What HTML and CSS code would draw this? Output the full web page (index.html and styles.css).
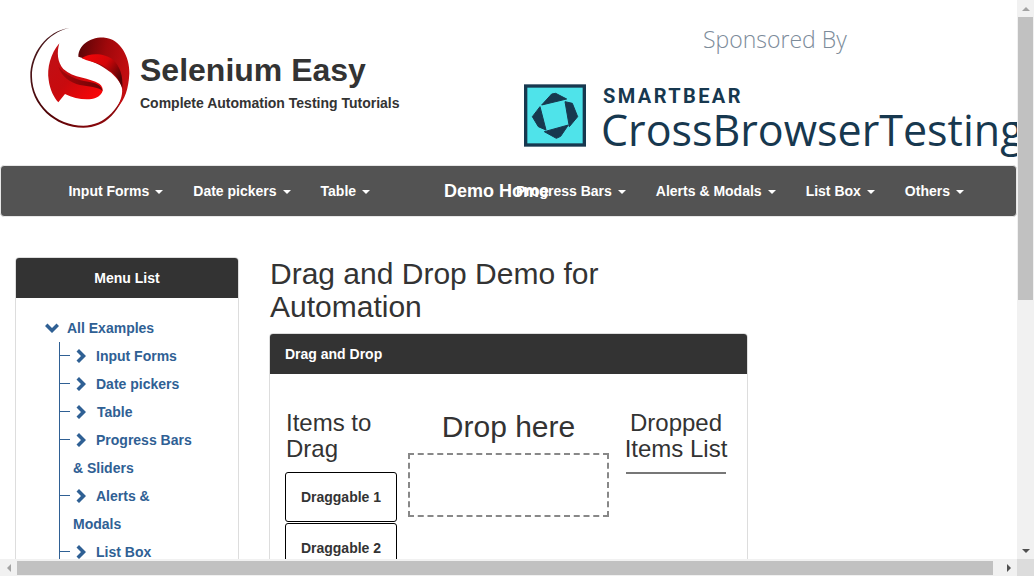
FILE: index.html
```html
<!DOCTYPE HTML>
<html>
<head>
<meta charset="utf-8">
<title>Selenium Easy - Drag and Drop Demo</title>
<link rel="stylesheet" href="styles.css">
</head>
<body>
<div class="window">
  <div class="page">
    <header class="top">
      <svg class="logo" viewBox="0 0 315 315" width="105" height="105">
        <defs>
          <linearGradient id="ringGrad" x1="0" y1="0" x2="1" y2="1">
            <stop offset="0" stop-color="#4a2024"/>
            <stop offset="0.5" stop-color="#4d0306"/>
            <stop offset="1" stop-color="#a80a0e"/>
          </linearGradient>
          <linearGradient id="upperGrad" x1="0" y1="0" x2="1" y2="0.3">
            <stop offset="0" stop-color="#560306"/>
            <stop offset="0.55" stop-color="#a0080b"/>
            <stop offset="1" stop-color="#c20d11"/>
          </linearGradient>
          <linearGradient id="foldGrad" x1="0" y1="0" x2="1" y2="0.6">
            <stop offset="0" stop-color="#f50508"/>
            <stop offset="0.55" stop-color="#d40609"/>
            <stop offset="1" stop-color="#560306"/>
          </linearGradient>
          <linearGradient id="lowerGrad" x1="0" y1="0.2" x2="0.8" y2="1">
            <stop offset="0" stop-color="#c01015"/>
            <stop offset="0.5" stop-color="#c80a0e"/>
            <stop offset="1" stop-color="#f80507"/>
          </linearGradient>
          <linearGradient id="stripGrad" x1="0" y1="0" x2="1" y2="0">
            <stop offset="0" stop-color="#a8070a"/>
            <stop offset="1" stop-color="#6a0306"/>
          </linearGradient>
        </defs>
        <path fill="url(#ringGrad)" d="M118 9C50 18 0 85 1 155C2 240 75 308 160 308C225 308 275 265 296 160C275 250 225 302 160 302C80 302 7 238 6 155C5 90 52 22 118 9Z"/>
        <path fill="url(#upperGrad)" d="M145 95C146 60 180 35 225 38C270 42 300 95 298 145C296 190 285 225 262 248C272 225 280 205 275 185C265 155 225 118 145 95Z"/>
        <path fill="url(#foldGrad)" d="M155 100C180 82 225 85 250 105C268 122 280 150 277 190C268 160 245 135 215 120C195 112 170 107 155 100Z"/>
        <path fill="url(#lowerGrad)" d="M88 55C62 85 50 130 56 165C60 195 72 218 85 232L105 207C135 222 175 228 198 218C220 208 225 190 208 176C180 158 130 160 100 132C82 112 80 82 88 55Z"/>
        <path fill="url(#stripGrad)" d="M85 125C105 150 140 165 175 170C195 173 215 180 218 198C205 185 175 185 150 180C120 172 95 155 85 125Z"/>
      </svg>
      <div class="brand-text">
        <h1>Selenium Easy</h1>
        <p>Complete Automation Testing Tutorials</p>
      </div>
      <div class="sponsor">
        <p class="sponsor-label">Sponsored By</p>
        <div class="sponsor-logo">
          <svg class="cbt-icon" viewBox="27 28 186 187" width="62" height="63">
            <rect x="32" y="33" width="176" height="177" fill="#4fe3ea" stroke="#17384f" stroke-width="10"/>
            <g fill="#17384f" stroke="#17384f" stroke-width="3" stroke-linejoin="round">
              <path d="M80 90L110 57L122 55L155 72Z"/>
              <path d="M150 80L172 85L188 125L163 155Z"/>
              <path d="M52 125L75 95L93 165L70 155Z"/>
              <path d="M88 170L160 150L137 184L124 190Z"/>
            </g>
          </svg>
          <div class="cbt-text">
            <span class="cbt-small">SMARTBEAR</span>
            <span class="cbt-big">CrossBrowserTesting</span>
          </div>
        </div>
      </div>
    </header>

    <nav class="navbar">
      <ul class="nav-list nav-left">
        <li>Input Forms<i class="caret"></i></li>
        <li>Date pickers<i class="caret"></i></li>
        <li>Table<i class="caret"></i></li>
      </ul>
      <span class="nav-brand">Demo Home</span>
      <ul class="nav-list">
        <li>Progress Bars<i class="caret"></i></li>
        <li>Alerts &amp; Modals<i class="caret"></i></li>
        <li>List Box<i class="caret"></i></li>
        <li>Others<i class="caret"></i></li>
      </ul>
    </nav>

    <div class="content">
      <aside class="panel sidebar">
        <div class="panel-head center">Menu List</div>
        <div class="tree">
          <div class="tree-root">
            <svg class="chev-down" viewBox="0 0 14 10" width="14" height="10"><path d="M0 3L2.5 .5L7 5L11.5 .5L14 3L7 10Z"/></svg>All Examples
          </div>
          <ul class="tree-list">
            <li><svg class="chev" viewBox="0 0 10 14" width="10" height="14"><path d="M3 0L10 7L3 14L.5 11.5L5 7L.5 2.5Z"/></svg>Input Forms</li>
            <li><svg class="chev" viewBox="0 0 10 14" width="10" height="14"><path d="M3 0L10 7L3 14L.5 11.5L5 7L.5 2.5Z"/></svg>Date pickers</li>
            <li><svg class="chev chev-wide" viewBox="0 0 10 14" width="10" height="14"><path d="M3 0L10 7L3 14L.5 11.5L5 7L.5 2.5Z"/></svg>Table</li>
            <li><svg class="chev" viewBox="0 0 10 14" width="10" height="14"><path d="M3 0L10 7L3 14L.5 11.5L5 7L.5 2.5Z"/></svg>Progress Bars &amp; Sliders</li>
            <li><svg class="chev" viewBox="0 0 10 14" width="10" height="14"><path d="M3 0L10 7L3 14L.5 11.5L5 7L.5 2.5Z"/></svg>Alerts &amp; Modals</li>
            <li><svg class="chev" viewBox="0 0 10 14" width="10" height="14"><path d="M3 0L10 7L3 14L.5 11.5L5 7L.5 2.5Z"/></svg>List Box</li>
          </ul>
        </div>
      </aside>

      <main class="main">
        <h2 class="page-title">Drag and Drop Demo for Automation</h2>
        <section class="panel">
          <div class="panel-head">Drag and Drop</div>
          <div class="dnd">
            <div class="col-items">
              <h3>Items to Drag</h3>
              <div class="draggable">Draggable 1</div>
              <div class="draggable">Draggable 2</div>
            </div>
            <div class="col-drop">
              <h2>Drop here</h2>
              <div class="dropzone"></div>
            </div>
            <div class="col-list">
              <h3>Dropped Items List</h3>
              <hr>
            </div>
          </div>
        </section>
      </main>
    </div>
  </div>

  <div class="vbar">
    <span class="sb-btn"><i class="arrow-up"></i></span>
    <span class="vthumb"></span>
    <span class="sb-rest"></span>
    <span class="sb-btn"><i class="arrow-down"></i></span>
  </div>
  <div class="hbar">
    <span class="sb-btn"><i class="arrow-left"></i></span>
    <span class="hthumb"></span>
    <span class="sb-rest"></span>
    <span class="sb-btn"><i class="arrow-right"></i></span>
  </div>
  <div class="corner"></div>
</div>
</body>
</html>
```
FILE: styles.css
```css
* {
  padding: 0;
  margin: 0;
  box-sizing: border-box;
}
body {
  font-family: "Liberation Sans", Arial, sans-serif;
  font-size: 14px;
  color: #333;
  background: #fff;
  overflow: hidden;
}
ul {
  list-style: none;
}

/* window + fake scrollbars */
.window {
  display: grid;
  grid-template-columns: 1017px 17px;
  grid-template-rows: 559px 17px;
  width: 1034px;
  height: 576px;
}
.page {
  overflow: hidden;
}
.vbar {
  display: flex;
  flex-direction: column;
  background: #f1f1f1;
}
.hbar {
  display: flex;
  background: #f1f1f1;
}
.corner {
  background: #dcdcdc;
}
.sb-btn {
  flex: none;
  width: 17px;
  height: 17px;
  display: flex;
  align-items: center;
  justify-content: center;
}
.sb-rest {
  flex: 1;
}
.vthumb {
  flex: none;
  height: 283px;
  margin: 0 1px;
  background: #c1c1c1;
}
.hthumb {
  flex: none;
  width: 976px;
  margin: 2px 0 1px;
  background: #c1c1c1;
}
.arrow-up {
  border: 4px solid transparent;
  border-top: 0;
  border-bottom: 4px solid #a3a3a3;
}
.arrow-down {
  border: 4px solid transparent;
  border-bottom: 0;
  border-top: 4px solid #505050;
}
.arrow-left {
  border: 4px solid transparent;
  border-left: 0;
  border-right: 4px solid #a3a3a3;
}
.arrow-right {
  border: 4px solid transparent;
  border-right: 0;
  border-left: 4px solid #505050;
}

/* header */
.top {
  display: flex;
  height: 165px;
}
.logo {
  flex: none;
  margin: 25px 5px 0 30px;
}
.brand-text {
  flex: none;
  width: 384px;
  padding-top: 51px;
}
.brand-text h1 {
  font-size: 32px;
  line-height: 38px;
  font-weight: bold;
}
.brand-text p {
  margin-top: 6px;
  font-size: 14px;
  line-height: 16px;
  font-weight: bold;
}
.sponsor {
  flex: 1;
  min-width: 0;
  overflow: hidden;
}
.sponsor-label {
  margin: 23px 0 0 179px;
  font-family: "Open Sans", sans-serif;
  font-weight: 300;
  font-size: 23px;
  line-height: 33px;
  color: #7c8b9a;
}
.sponsor-logo {
  display: flex;
  margin-top: 28px;
}
.cbt-icon {
  flex: none;
  margin-right: 15px;
}
.cbt-text {
  display: flex;
  flex-direction: column;
  white-space: nowrap;
  color: #17384f;
}
.cbt-small {
  padding-left: 2px;
  font-family: Roboto, sans-serif;
  font-weight: bold;
  font-size: 20px;
  line-height: 24px;
  letter-spacing: 2.4px;
}
.cbt-big {
  margin-top: -1px;
  font-family: "Open Sans", sans-serif;
  font-size: 43px;
  line-height: 46px;
}

/* navbar */
.navbar {
  display: flex;
  align-items: center;
  height: 52px;
  background: #535353;
  border: 1px solid #e7e7e7;
  border-radius: 4px;
  color: #fff;
  font-weight: bold;
  white-space: nowrap;
}
.nav-list {
  display: flex;
  flex: none;
}
.nav-list li {
  padding: 0 15px;
  line-height: 50px;
}
.nav-left {
  margin-left: 52.4px;
}
.nav-brand {
  flex: none;
  width: 57px;
  margin-left: 59px;
  font-size: 18px;
}
.caret {
  display: inline-block;
  margin-left: 6px;
  vertical-align: middle;
  border-top: 4px solid #fff;
  border-left: 4px solid transparent;
  border-right: 4px solid transparent;
}

/* content */
.content {
  display: flex;
  align-items: flex-start;
  padding: 40px 0 0 15px;
}
.panel {
  background: #fff;
  border: 1px solid #ddd;
  border-radius: 4px;
}
.panel-head {
  height: 40px;
  padding: 0 15px;
  background: #333;
  border-radius: 3px 3px 0 0;
  color: #fff;
  font-weight: bold;
  line-height: 40px;
}
.center {
  text-align: center;
}
.sidebar {
  flex: none;
  width: 224px;
  height: 400px;
}
.tree {
  padding: 16px 0 0 29px;
  color: #2f6094;
  font-weight: bold;
  line-height: 28px;
}
.chev-down {
  margin-right: 8px;
  fill: #2f6094;
}
.tree-list {
  width: 140px;
  margin-left: 14px;
  border-left: 1px solid #2f6094;
}
.tree-list li {
  position: relative;
  padding-left: 13px;
}
.tree-list li::before {
  content: "";
  position: absolute;
  left: 0;
  top: 13px;
  width: 10px;
  height: 1px;
  background: #2f6094;
}
.chev {
  margin: 0 10px 0 3px;
  vertical-align: -2px;
  fill: #2f6094;
}
.chev-wide {
  margin-right: 11px;
}
.main {
  flex: none;
  width: 479px;
  margin-left: 30px;
}
.page-title {
  max-width: 350px;
  margin: 0 0 10px 1px;
  font-size: 30px;
  line-height: 33px;
  font-weight: normal;
}
.dnd {
  display: flex;
  height: 400px;
  padding: 36px 0 0 15px;
}
.dnd h3 {
  margin-bottom: 10px;
  font-size: 24px;
  line-height: 26px;
  font-weight: normal;
}
.col-items {
  flex: none;
  width: 112px;
}
.col-items h3 {
  padding-left: 1px;
}
.draggable {
  height: 50px;
  margin-bottom: 1px;
  border: 1px solid #000;
  border-radius: 3px;
  font-weight: bold;
  line-height: 48px;
  text-align: center;
}
.col-drop {
  flex: none;
  width: 201px;
  margin-left: 11px;
  text-align: center;
}
.col-drop h2 {
  margin-bottom: 10px;
  font-size: 30px;
  line-height: 33px;
  font-weight: normal;
}
.dropzone {
  height: 64px;
  border: 2px dashed #888;
}
.col-list {
  flex: none;
  width: 100px;
  margin-left: 17px;
  text-align: center;
}
.col-list h3 {
  margin: 0 -5px 10px;
}
.col-list hr {
  height: 2px;
  border: 0;
  background: #777;
}
```
